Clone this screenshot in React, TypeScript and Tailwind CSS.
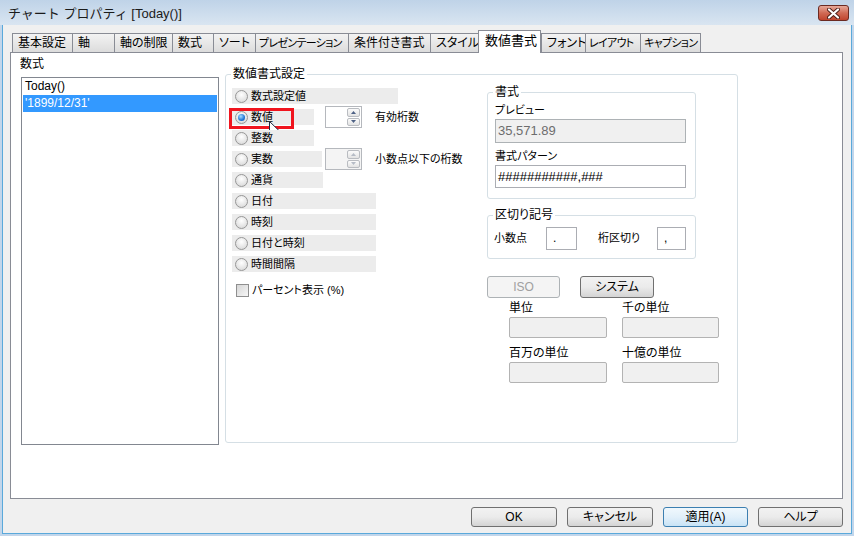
import React from 'react'

const FONT = "font-['Liberation_Sans','Noto_Sans_CJK_JP',sans-serif]"

interface TabDef {
  label: string
  width: string
  active?: boolean
  last?: boolean
  tight?: boolean
}

const tabs: TabDef[] = [
  { label: '基本設定', width: 'w-[60px]' },
  { label: '軸', width: 'w-[42px]' },
  { label: '軸の制限', width: 'w-[58px]' },
  { label: '数式', width: 'w-[41px]' },
  { label: 'ソート', width: 'w-[42px]' },
  { label: 'プレゼンテーション', width: 'w-[93px]', tight: true },
  { label: '条件付き書式', width: 'w-[82px]' },
  { label: 'スタイル', width: 'w-[48px]' },
  { label: '数値書式', width: 'w-[63px]', active: true },
  { label: 'フォント', width: 'w-[44px]' },
  { label: 'レイアウト', width: 'w-[55px]', tight: true },
  { label: 'キャプション', width: 'w-[61px]', last: true, tight: true },
]

interface RadioDef {
  label: string
  bar: string
  checked?: boolean
}

const radios: RadioDef[] = [
  { label: '数式設定値', bar: 'w-[166px]' },
  { label: '数値', bar: 'w-[82px]', checked: true },
  { label: '整数', bar: 'w-[82px]' },
  { label: '実数', bar: 'w-[90px]' },
  { label: '通貨', bar: 'w-[91px]' },
  { label: '日付', bar: 'w-[144px]' },
  { label: '時刻', bar: 'w-[144px]' },
  { label: '日付と時刻', bar: 'w-[144px]' },
  { label: '時間間隔', bar: 'w-[144px]' },
]

const CloseButton: React.FC = () => (
  <div className="mt-[5px] mr-[5px] w-[31px] h-[16px] rounded-[3px] border border-[#6b2a22] bg-gradient-to-b from-[#e6a899] via-[#d06a55] to-[#c0432d] flex items-center justify-center">
    <svg width="13" height="11" viewBox="0 0 13 11">
      <path d="M2 1.5 L11 9.5 M11 1.5 L2 9.5" stroke="#4a1d17" strokeWidth="4" strokeLinecap="round" />
      <path d="M2 1.5 L11 9.5 M11 1.5 L2 9.5" stroke="#ffffff" strokeWidth="2.2" strokeLinecap="round" />
    </svg>
  </div>
)

const Radio: React.FC<{ checked?: boolean }> = ({ checked }) => (
  <span className="ml-[3px] w-[13px] h-[13px] rounded-full border border-[#979797] bg-[radial-gradient(circle_at_50%_35%,#ffffff,#d3d3d3)] flex items-center justify-center shrink-0">
    {checked && (
      <span className="w-[7px] h-[7px] rounded-full bg-[radial-gradient(circle_at_40%_35%,#a8dcff,#1f76d6_60%,#0c4d9e)]" />
    )}
  </span>
)

const Spin: React.FC<{ disabled?: boolean; offset: string }> = ({ disabled, offset }) => (
  <div
    className={`${offset} w-[37px] h-[22px] border border-[#b5b8bd] flex shrink-0 ${
      disabled ? 'bg-[#f4f4f4]' : 'bg-white'
    }`}
  >
    <div className="flex-1" />
    <div className="w-[15px] flex flex-col p-px gap-px">
      <div className="flex-1 border border-[#b9bcc1] rounded-[2px] bg-gradient-to-b from-[#fbfbfb] to-[#e3e3e3] flex items-center justify-center">
        <svg width="5" height="3" viewBox="0 0 5 3">
          <path d="M0 3 L2.5 0 L5 3 Z" fill={disabled ? '#b6bcc6' : '#4d6185'} />
        </svg>
      </div>
      <div className="flex-1 border border-[#b9bcc1] rounded-[2px] bg-gradient-to-b from-[#fbfbfb] to-[#e3e3e3] flex items-center justify-center">
        <svg width="5" height="3" viewBox="0 0 5 3">
          <path d="M0 0 L2.5 3 L5 0 Z" fill={disabled ? '#b6bcc6' : '#4d6185'} />
        </svg>
      </div>
    </div>
  </div>
)

const Cursor: React.FC = () => (
  <svg className="absolute left-[37px] top-[12px]" width="13" height="21" viewBox="0 0 13 21">
    <path
      d="M0.5 0.5 L0.5 16.5 L4.5 12.5 L7.5 19.5 L10 18.5 L7 11.5 L12 11.5 Z"
      fill="#ffffff"
      stroke="#1f2a44"
      strokeWidth="1"
      strokeLinejoin="round"
    />
  </svg>
)

const GroupLegend: React.FC<{ text: string; className: string }> = ({ text, className }) => (
  <span className={`absolute bg-white px-[2px] leading-[14px] ${className}`}>{text}</span>
)

const VistaButton: React.FC<{ label: string; focused?: boolean; className: string }> = ({
  label,
  focused,
  className,
}) => (
  <div
    className={`${className} rounded-[3px] border ${
      focused
        ? 'border-[#3c7fb1] bg-gradient-to-b from-[#f0f8fd] via-[#e2f0fa] to-[#c8e3f6]'
        : 'border-[#707070] bg-gradient-to-b from-[#f2f2f2] via-[#ebebeb] to-[#d4d4d4]'
    } flex items-center justify-center text-[12px] leading-none`}
  >
    {label}
  </div>
)

const UnitField: React.FC<{ label: string; width: string }> = ({ label, width }) => (
  <div className="flex flex-col">
    <span className="h-[16px] text-[12px] leading-[16px]">{label}</span>
    <div className={`${width} mt-[1px] h-[21px] rounded-[2px] border border-[#b3b3b3] bg-[#f0f0f0]`} />
  </div>
)

export default function App() {
  return (
    <div className={`${FONT} w-[854px] h-[536px] flex flex-col bg-[#c2d6eb] text-black overflow-hidden`}>
      <div className="h-[25px] shrink-0 flex items-start justify-between bg-gradient-to-b from-[#bfd3e8] to-[#d9e5f1]">
        <span className="ml-[8px] mt-[5px] text-[13px] leading-[18px] text-[#1b1b1b]">
          チャート プロパティ [Today()]
        </span>
        <CloseButton />
      </div>

      <div className="flex-1 mx-[2px] mb-[2px] border-x border-b border-[#5aa9db] bg-[#f0f0f0] flex flex-col pl-[7px] pr-[8px] [font-feature-settings:'palt']">
        {/* tabs */}
        <div className="mt-[5px] h-[22px] flex items-end pl-[2px]">
          {tabs.map((t) =>
            t.active ? (
              <div
                key={t.label}
                className={`${t.width} h-[23px] -mb-px relative z-10 bg-white border-x border-t border-[#898c95] pl-[6px] text-[13px] leading-[20px] whitespace-nowrap`}
              >
                {t.label}
              </div>
            ) : (
              <div
                key={t.label}
                className={`${t.width} h-[19px] border-l border-t ${t.last ? 'border-r' : ''} ${
                  t.tight ? 'pl-[3px] text-[11px] tracking-[-0.7px]' : 'pl-[5px] text-[12px]'
                } border-[#898c95] bg-gradient-to-b from-[#f3f3f3] to-[#dcdcdc] leading-[18px] whitespace-nowrap overflow-hidden`}
              >
                {t.label}
              </div>
            ),
          )}
        </div>

        {/* panel */}
        <div className="h-[447px] shrink-0 bg-white border border-[#898c95] flex items-start">
          {/* formula list */}
          <div className="ml-[9px] mt-[3px] flex flex-col">
            <span className="h-[16px] text-[12px] leading-[16px]">数式</span>
            <div className="mt-[5px] ml-px w-[198px] h-[368px] border border-[#828790] p-px text-[12px]">
              <div className="h-[16px] leading-[15px] px-[2px]">Today()</div>
              <div className="h-[17px] leading-[16px] px-[2px] bg-[#3399ff] text-white">'1899/12/31'</div>
            </div>
          </div>

          {/* group box */}
          <div className="ml-[6px] mt-[21px] w-[513px] h-[369px] relative rounded-[3px] border border-[#d5dfe5] flex items-start pl-[6px]">
            <GroupLegend text="数値書式設定" className="left-[5px] -top-[8px] text-[12px]" />

            {/* radio column */}
            <div className="w-[255px] pt-[13px] flex flex-col gap-[5px] text-[11px]">
              {radios.map((r) => (
                <div key={r.label} className="h-[16px] flex items-center relative">
                  <div className={`${r.bar} h-[16px] bg-[#ececec] flex items-center`}>
                    <Radio checked={r.checked} />
                    <span className="ml-[3px] leading-[16px] whitespace-nowrap">{r.label}</span>
                  </div>
                  {r.label === '数値' && (
                    <>
                      <Spin offset="ml-[11px]" />
                      <span className="ml-[13px] whitespace-nowrap">有効桁数</span>
                      <div className="absolute -left-[3px] -top-[1px] w-[65px] h-[21px] border-[3px] border-[#f0141e]" />
                      <Cursor />
                    </>
                  )}
                  {r.label === '実数' && (
                    <>
                      <Spin offset="ml-[3px]" disabled />
                      <span className="ml-[13px] whitespace-nowrap">小数点以下の桁数</span>
                    </>
                  )}
                </div>
              ))}
              <div className="mt-[5px] h-[16px] flex items-center">
                <span className="ml-[4px] w-[13px] h-[13px] border border-[#8f8f8f] bg-gradient-to-br from-[#d6d6d6] to-[#f7f7f7] shrink-0" />
                <span className="ml-[3px] whitespace-nowrap">パーセント表示 (%)</span>
              </div>
            </div>

            {/* right column */}
            <div className="w-[240px] pt-[17px] flex flex-col items-start text-[11px]">
              <div className="w-[209px] h-[107px] relative rounded-[3px] border border-[#d5dfe5] flex flex-col px-[7px]">
                <GroupLegend text="書式" className="left-[5px] -top-[8px] text-[12px]" />
                <span className="mt-[10px] h-[14px] leading-[14px]">プレビュー</span>
                <div className="mt-[2px] w-[191px] h-[24px] border border-[#adb2b5] bg-[#f0f0f0] flex items-center px-[2px] text-[13px] text-[#6d6d6d]">
                  35,571.89
                </div>
                <span className="mt-[6px] h-[14px] leading-[14px]">書式パターン</span>
                <div className="mt-[2px] w-[191px] h-[23px] border border-[#abadb3] bg-white flex items-center px-[2px] text-[13px]">
                  ###########,###
                </div>
              </div>

              <div className="mt-[16px] w-[209px] h-[44px] relative rounded-[3px] border border-[#d5dfe5] flex items-start pt-[11px] pl-[6px]">
                <GroupLegend text="区切り記号" className="left-[5px] -top-[8px] text-[12px]" />
                <span className="w-[52px] h-[23px] leading-[23px]">小数点</span>
                <div className="w-[31px] h-[23px] border border-[#abadb3] bg-white pl-[6px] text-[12px] leading-[20px]">.</div>
                <span className="ml-[21px] w-[59px] h-[23px] leading-[23px]">桁区切り</span>
                <div className="w-[29px] h-[23px] border border-[#abadb3] bg-white pl-[6px] text-[12px] leading-[20px]">,</div>
              </div>

              <div className="mt-[17px] flex items-start">
                <div className="w-[73px] h-[22px] rounded-[3px] border border-[#adb2b5] bg-[#f4f4f4] flex items-center justify-center text-[12px] text-[#a0a0a0]">
                  ISO
                </div>
                <VistaButton label="システム" className="ml-[20px] w-[74px] h-[22px] text-[11px]" />
              </div>

              <div className="ml-[22px] mt-[2px] grid grid-cols-[98px_97px] gap-x-[15px] gap-y-[7px]">
                <UnitField label="単位" width="w-[98px]" />
                <UnitField label="千の単位" width="w-[97px]" />
                <UnitField label="百万の単位" width="w-[98px]" />
                <UnitField label="十億の単位" width="w-[97px]" />
              </div>
            </div>
          </div>
        </div>

        {/* dialog buttons */}
        <div className="mt-[8px] flex justify-end gap-[10px]">
          <VistaButton label="OK" className="w-[86px] h-[20px]" />
          <VistaButton label="キャンセル" className="w-[86px] h-[20px]" />
          <VistaButton label="適用(A)" focused className="w-[85px] h-[20px]" />
          <VistaButton label="ヘルプ" className="w-[85px] h-[20px]" />
        </div>
      </div>
    </div>
  )
}
